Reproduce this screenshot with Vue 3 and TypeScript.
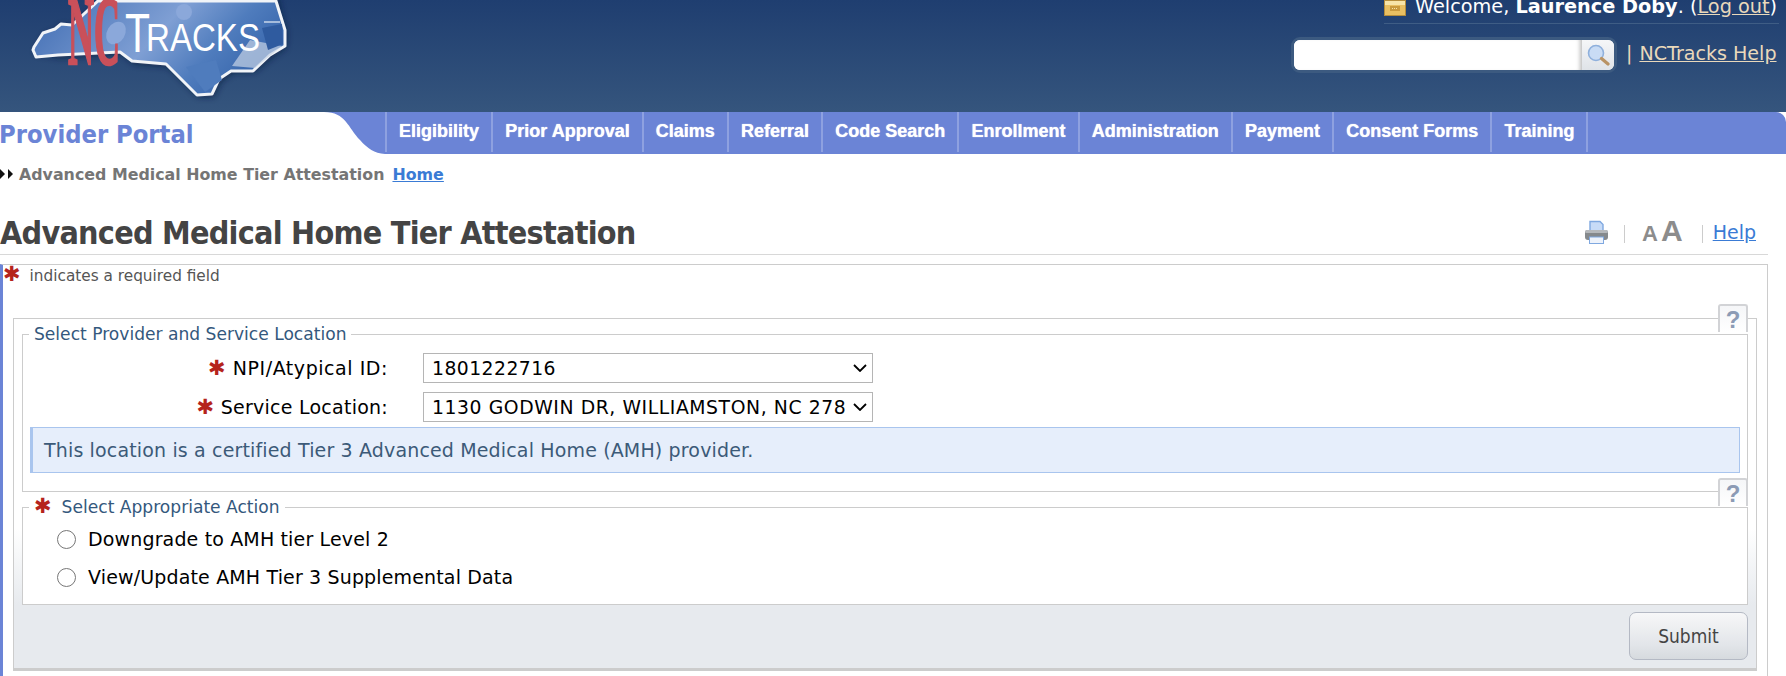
<script setup lang="ts">
const navItems: string[] = ['Eligibility', 'Prior Approval', 'Claims', 'Referral', 'Code Search', 'Enrollment', 'Administration', 'Payment', 'Consent Forms', 'Training']
</script>

<template>
  <div class="page">
    <header class="top">
      <svg class="logo" width="300" height="112" viewBox="0 0 300 112">
        <defs>
          <linearGradient id="mapFill" x1="0" y1="0" x2="1" y2="0.35">
            <stop offset="0" stop-color="#3f6cb2" />
            <stop offset="0.55" stop-color="#7f9fd4" />
            <stop offset="0.8" stop-color="#4f7cbd" />
            <stop offset="1" stop-color="#3b69ae" />
          </linearGradient>
          <filter id="blurShadow" x="-10%" y="-10%" width="120%" height="130%">
            <feGaussianBlur stdDeviation="3" />
          </filter>
        </defs>
        <path d="M36 54 L36 49 L44 35 L56 30 L62 25 L72 27 L100 0 L278 -4 L282 16 L287 32 L286 48 L272 58 L255 72 L233 73 L221 82 L214 97 L198 97 L168 67 L134 64 L122 54 L60 58 Z" fill="#0c1f3d" opacity="0.65" filter="url(#blurShadow)" />
        <path d="M33 50 L34 47 L43 33 L55 29 L61 24 L72 25 L98 1 L276 1 L280 14 L285 30 L285 46 L270 55 L253 71 L231 71 L219 79 L212 94 L197 95 L166 64 L132 61 L120 52 L58 55 L36 57 Z" fill="url(#mapFill)" stroke="#f1f4f8" stroke-width="3" stroke-linejoin="round" />
        <circle cx="184" cy="12" r="8" fill="#8ba8da" />
        <ellipse cx="116" cy="33" rx="9" ry="12" fill="#8ba8da" transform="rotate(30 116 33)" />
        <path d="M186 67 L216 60 L222 80 L205 92 Z" fill="#4f7cbd" />
        <path d="M232 66 L250 40 L282 46 L255 68 Z" fill="#c6d3e6" opacity="0.7" />
        <path d="M262 28 L282 24 L283 44 L268 50 Z" fill="#2f5b9f" />
        <path d="M264 22 L280 22" stroke="#e8eef7" stroke-width="1.2" fill="none" />
        <text x="68" y="64" class="logo-nc" textLength="52" lengthAdjust="spacingAndGlyphs">NC</text>
        <text x="125" y="52" class="logo-t" textLength="25" lengthAdjust="spacingAndGlyphs">T</text>
        <text x="146" y="51" class="logo-racks" textLength="114" lengthAdjust="spacingAndGlyphs">RACKS</text>
      </svg>

      <div class="account">
        <div class="welcome">
          <svg class="wallet" width="22" height="16" viewBox="0 0 22 16">
            <rect x="0.5" y="0.5" width="21" height="15" fill="#e8bf62" stroke="#b58d3c" />
            <rect x="1" y="1" width="20" height="4" fill="#f7e4a8" />
            <rect x="6" y="6" width="10" height="5" fill="#c99a3e" />
            <path d="M8 8.5 H14" stroke="#f7e4a8" stroke-dasharray="1 1" />
          </svg>
          <span>Welcome, <b>Laurence Doby</b>. (<a class="tan-link">Log out</a>)</span>
        </div>
        <div class="search-row">
          <div class="search">
            <div class="search-input"></div>
            <div class="search-button">
              <svg width="24" height="24" viewBox="0 0 24 24">
                <circle cx="10" cy="10" r="7.5" fill="#c9dcf5" stroke="#8fb0dc" stroke-width="1.6" />
                <path d="M15.5 15.5 L22 21" stroke="#b99364" stroke-width="3.2" stroke-linecap="round" />
              </svg>
            </div>
          </div>
          <span class="pipe">|</span>
          <a class="tan-link help-top">NCTracks Help</a>
        </div>
      </div>
    </header>

    <nav class="nav">
      <div class="brand">Provider Portal</div>
      <svg class="curve" width="61" height="42" viewBox="0 0 61 42">
        <path d="M0 0 C22 0 24 16 36 28 C44 37 50 41 61 42 L61 0 Z" fill="#6b84d6" />
      </svg>
      <ul class="menu">
        <li v-for="item in navItems" :key="item">{{ item }}</li>
      </ul>
    </nav>

    <div class="crumbs">
      <span class="arrows">
        <i></i><i></i>
      </span>
      <span class="crumb-current">Advanced Medical Home Tier Attestation</span>
      <a class="crumb-home">Home</a>
    </div>

    <div class="title-row">
      <h1>Advanced Medical Home Tier Attestation</h1>
      <div class="tools">
        <svg width="25" height="25" viewBox="0 0 25 25">
          <path d="M6 11 V1.5 H16 L19 4.5 V11 Z" fill="#c7dbf7" stroke="#7fa8e0" stroke-width="1.4" />
          <rect x="1" y="10" width="23" height="10" rx="3" fill="#85898c" />
          <rect x="1" y="10" width="23" height="3" rx="1.5" fill="#b5b8bb" />
          <rect x="5.5" y="17" width="14" height="6.5" fill="#eef3fb" stroke="#7fa8e0" />
        </svg>
        <span class="sep"></span>
        <span class="aa"><span class="a-small">A</span><span class="a-big">A</span></span>
        <span class="sep sep-right"></span>
        <a class="help">Help</a>
      </div>
    </div>

    <section class="box">
      <div class="required-note">
        <span class="star">✱</span>
        <span class="note-text">indicates a required field</span>
      </div>

      <div class="panel">
        <a class="q q-one">?</a>
        <fieldset class="fs fs-one">
          <legend>Select Provider and Service Location</legend>
          <div class="form-row">
            <label class="field-label label-npi"><span class="star">✱</span> NPI/Atypical ID:</label>
            <select class="sel">
              <option>1801222716</option>
            </select>
          </div>
          <div class="form-row row-two">
            <label class="field-label"><span class="star">✱</span> Service Location:</label>
            <select class="sel sel-location">
              <option>1130 GODWIN DR, WILLIAMSTON, NC 27892-8235</option>
            </select>
          </div>
          <div class="info">This location is a certified Tier 3 Advanced Medical Home (AMH) provider.</div>
        </fieldset>

        <a class="q q-two">?</a>
        <fieldset class="fs fs-two">
          <legend><span class="star">✱</span><span class="legend-gap">Select Appropriate Action</span></legend>
          <label class="radio-row"><input type="radio" name="action" />Downgrade to AMH tier Level 2</label>
          <label class="radio-row"><input type="radio" name="action" />View/Update AMH Tier 3 Supplemental Data</label>
        </fieldset>

        <div class="actions">
          <button class="submit" type="button">Submit</button>
        </div>
      </div>
    </section>
  </div>
</template>

<style scoped>
.page {
  width: 1786px;
  height: 676px;
  overflow: hidden;
  background: #fff;
  font-family: "DejaVu Sans", sans-serif;
  color: #000;
}
.top {
  height: 112px;
  display: flex;
  justify-content: space-between;
  background: linear-gradient(#1f3e70, #35557d);
  overflow: hidden;
}
.logo { display: block; flex: none; }
.logo-nc {
  font-family: "Liberation Serif", serif;
  font-weight: 700;
  font-size: 98px;
  fill: #c9505a;
  stroke: #c9505a;
  stroke-width: 2.6px;
}
.logo-t, .logo-racks {
  font-family: "Liberation Sans", sans-serif;
  fill: #fff;
}
.logo-t { font-size: 56px; }
.logo-racks { font-size: 39px; }
.account {
  width: 495px;
  margin-right: 7px;
  display: flex;
  flex-direction: column;
  align-items: flex-end;
}
.welcome {
  width: 395px;
  height: 24px;
  margin-top: -6px;
  display: flex;
  align-items: center;
  gap: 9px;
  color: #fff;
  font-size: 19.3px;
  border-bottom: 1px solid #3f5d85;
  padding-bottom: 5px;
  white-space: nowrap;
}
.wallet { flex: none; margin-top: 4px; }
.tan-link { color: #ead9bb; text-decoration: underline; }
.search-row {
  display: flex;
  align-items: center;
  margin-top: 13px;
  width: 488px;
}
.search {
  width: 320px;
  height: 30px;
  border: 3px solid #3c5a80;
  border-radius: 9px;
  display: flex;
  overflow: hidden;
  background: #fff;
  flex: none;
}
.search-input { flex: 1; background: #fff; box-shadow: inset -5px 0 4px -3px #bbb; }
.search-button {
  width: 32px;
  background: linear-gradient(#f5f6f8, #dfe3e8);
  display: flex;
  align-items: center;
  justify-content: center;
}
.pipe { color: #ead9bb; margin-left: 9px; font-size: 19px; margin-top: -4px; }
.help-top { margin-left: 7px; font-size: 19.1px; white-space: nowrap; margin-top: -4px; }

.nav {
  height: 42px;
  display: flex;
  background: #fff;
}
.brand {
  width: 325px;
  flex: none;
  color: #6b84d6;
  font-size: 25.3px;
  font-weight: 700;
  font-stretch: condensed;
  line-height: 45px;
  margin-left: -1px;
  white-space: nowrap;
}
.curve { display: block; flex: none; }
.menu {
  flex: 1;
  list-style: none;
  margin: 0;
  padding: 0;
  display: flex;
  background: #6b84d6;
  border-top-right-radius: 10px;
}
.menu li {
  border-left: 2px solid #8ea1e0;
  margin-bottom: 2px;
  padding: 0 12.1px;
  color: #fff;
  font: 700 18px/38px "Liberation Sans", sans-serif;
  text-shadow: 0 0 1px #fff;
  white-space: nowrap;
}
.menu li:last-child { border-right: 2px solid #8ea1e0; }

.crumbs {
  height: 40px;
  display: flex;
  align-items: center;
  font-size: 15.85px;
  font-weight: 700;
  white-space: nowrap;
}
.arrows { display: flex; gap: 3px; margin-right: 6px; }
.arrows i {
  width: 0;
  height: 0;
  border-left: 5px solid #111;
  border-top: 5px solid transparent;
  border-bottom: 5px solid transparent;
}
.crumb-current { color: #757575; }
.crumb-home { color: #3a7bd5; text-decoration: underline; margin-left: 8px; }

.title-row {
  width: 1768px;
  height: 61px;
  box-sizing: border-box;
  display: flex;
  justify-content: space-between;
  align-items: flex-end;
  border-bottom: 1px solid #d8d8d8;
  padding: 0 12px 1px 0;
}
h1 {
  margin: 0;
  color: #444;
  font-size: 32px;
  letter-spacing: -0.75px;
  line-height: 40px;
  font-weight: 700;
  font-stretch: condensed;
  white-space: nowrap;
}
.tools {
  display: flex;
  align-items: center;
  height: 28px;
  margin-bottom: 7px;
}
.sep { width: 1px; height: 18px; background: #ccc; margin: 4px 17px 0 15px; }
.sep-right { margin-left: 19px; margin-right: 10px; }
.aa { display: flex; align-items: baseline; gap: 3px; color: #8c8c8c; font-weight: 700; font-family: "Liberation Sans", sans-serif; line-height: 28px; }
.a-small { font-size: 22px; }
.a-big { font-size: 30px; }
.help { color: #3a7bd5; text-decoration: underline; font-size: 19px; }

.box {
  width: 1768px;
  height: 500px;
  box-sizing: border-box;
  margin-top: 9px;
  border: 1px solid #ccc;
  border-left: 3px solid #6b84d6;
}
.required-note {
  height: 53px;
  display: flex;
  align-items: flex-start;
  gap: 9px;
  font-size: 15.3px;
  color: #555;
  line-height: 18px;
}
.note-text { margin-top: 2px; }
.star { color: #b5231c; font-size: 21px; line-height: 18px; font-family: "DejaVu Sans", sans-serif; }
.panel {
  position: relative;
  margin-left: 10px;
  width: 1744px;
  height: 353px;
  box-sizing: border-box;
  border: 1px solid #ccc;
  border-bottom: 3px solid #ccc;
  padding: 0 8px;
  background: linear-gradient(#fff 0, #fff 60%, #e7eaee 82%, #e7eaee 100%);
}
.fs {
  margin: 0;
  padding: 0;
  border: 1px solid #ccc;
  background: #fff;
  min-width: 0;
  box-sizing: border-box;
}
.fs legend {
  margin-left: 6px;
  padding: 0 5px;
  color: #34587d;
  font-size: 17.1px;
  line-height: 20px;
  white-space: nowrap;
}
.fs-one { height: 168px; margin-top: 5px; padding: 0 7px; }
.fs-one legend { margin-left: -1px; }
.fs-two { height: 108px; margin-top: 5px; }
.legend-gap { margin-left: 10px; }
.form-row {
  display: flex;
  align-items: center;
  height: 30px;
  margin-top: 9px;
}
.row-two { margin-top: 9px; }
.field-label {
  width: 388px;
  margin-left: -30px;
  text-align: right;
  font-size: 19px;
  letter-spacing: 0.25px;
  white-space: nowrap;
}
.label-npi { letter-spacing: 0.55px; }
.sel {
  appearance: none;
  width: 450px;
  height: 30px;
  margin-left: 35px;
  box-sizing: border-box;
  border: 1px solid #b5b5b5;
  border-radius: 0;
  padding: 0 26px 0 8px;
  background: #fff url("data:image/svg+xml,%3Csvg xmlns='http://www.w3.org/2000/svg' width='14' height='8'%3E%3Cpath d='M1 1 L7 7 L13 1' fill='none' stroke='%23000' stroke-width='1.8'/%3E%3C/svg%3E") no-repeat right 5px center;
  font-family: "DejaVu Sans", sans-serif;
  font-size: 18.8px;
  letter-spacing: 0.45px;
  color: #000;
}
.sel-location { letter-spacing: 0.58px; }
.info {
  height: 46px;
  box-sizing: border-box;
  margin-top: 5px;
  border: 1px solid #a9c5ee;
  border-left-width: 3px;
  background: #e6eefb;
  color: #3c5a78;
  font-size: 19px;
  letter-spacing: 0.15px;
  line-height: 44px;
  padding-left: 11px;
  white-space: nowrap;
}
.radio-row {
  display: flex;
  align-items: center;
  height: 38px;
  margin-left: 33px;
  font-size: 19px;
  letter-spacing: 0.15px;
  white-space: nowrap;
}
.radio-row:first-of-type { margin-top: 3px; }
.radio-row input {
  width: 19px;
  height: 19px;
  margin: 0 12px 0 1px;
}
.actions {
  display: flex;
  justify-content: flex-end;
  margin-top: 7px;
}
.submit {
  width: 119px;
  height: 48px;
  border: 1px solid #b4b9c4;
  border-radius: 7px;
  background: linear-gradient(#f7f7f8, #e2e5e9 70%, #d6dade);
  color: #444;
  font-family: "DejaVu Sans", sans-serif;
  font-size: 19px;
  font-stretch: condensed;
}
.q {
  position: absolute;
  right: 8px;
  width: 30px;
  height: 28px;
  box-sizing: border-box;
  background: linear-gradient(#f5f6f8, #fff);
  border: 2px solid #d2d3d6;
  border-bottom: 0;
  border-radius: 3px 3px 0 0;
  color: #8c9bb5;
  font: 700 24px/28px "Liberation Sans", sans-serif;
  text-align: center;
  z-index: 1;
}
.q-one { top: -15px; }
.q-two { top: 159px; }
</style>

<style>
html, body { margin: 0; overflow: hidden; background: #fff; }
</style>
